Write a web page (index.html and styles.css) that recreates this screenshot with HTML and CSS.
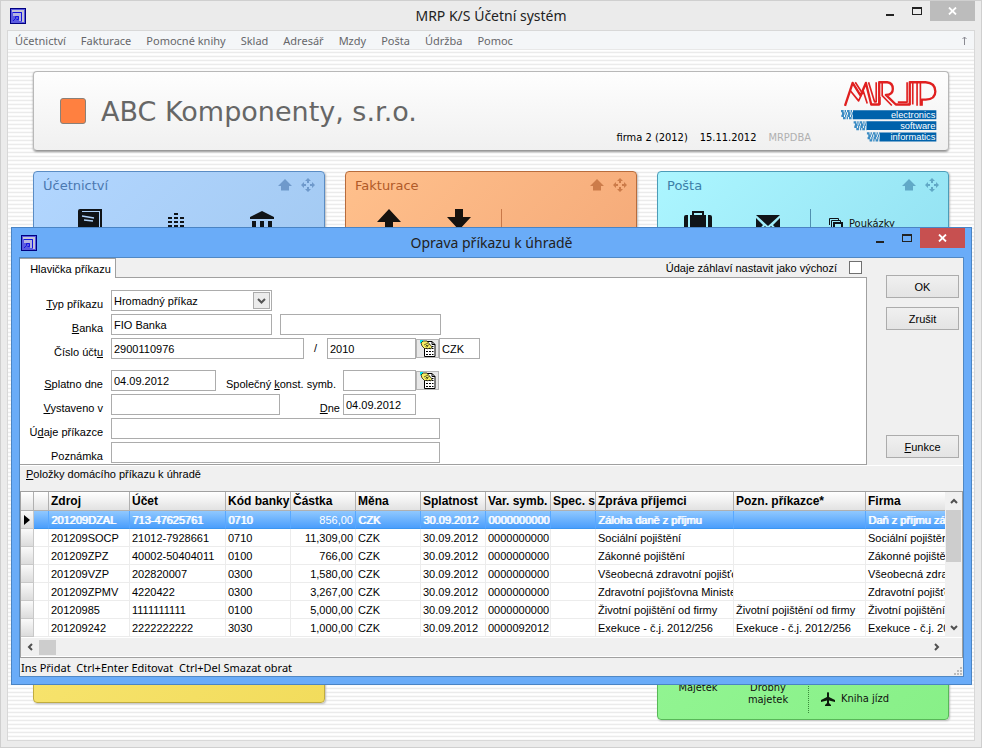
FILE: index.html
```html
<!DOCTYPE html>
<html lang="cs">
<head>
<meta charset="utf-8">
<title>MRP K/S Účetní systém</title>
<link rel="stylesheet" href="styles.css">
</head>
<body>
<svg class="defs" aria-hidden="true">
  <symbol id="app" viewBox="0 0 16 16">
    <rect x=".5" y=".5" width="15" height="15" fill="#5a5ae0" stroke="#000080"/>
    <path d="M2 2h12v12h-2V4H2z" fill="#c4c4d4"/>
    <path d="M3 4.500h8.500V13" fill="none" stroke="#1414e0"/>
    <path d="M3 5h8v8H9V8H3z" fill="#b4b4e0"/>
    <path d="M5.500 10.500v-2h3v3h-2M5.500 10.500L3 13" fill="none" stroke="#1414e0"/>
  </symbol>
  <symbol id="raise" viewBox="0 0 14 12"><path d="M7 0l7 7h-3v4.500H3V7H0z" fill="currentColor"/></symbol>
  <symbol id="move" viewBox="0 0 14 14"><path d="M7 0l3 3H8v2H6V3H4zM7 14l-3-3h2V9h2v2h2zM0 7l3-3v2h2v2H3v2zM14 7l-3 3V8H9V6h2V4z" fill="currentColor"/></symbol>
  <symbol id="min" viewBox="0 0 12 10"><path d="M2 8h8v2H2z" fill="currentColor"/></symbol>
  <symbol id="max" viewBox="0 0 12 10"><path d="M1 1h10v8H1zM2 3v5h8V3z" fill="currentColor" fill-rule="evenodd"/></symbol>
  <symbol id="close" viewBox="0 0 9 8"><path d="M1 .5l7 7M8 .5l-7 7" stroke="currentColor" stroke-width="1.800"/></symbol>
  <symbol id="list" viewBox="0 0 17 17">
    <path d="M5.500 1.500H13l3 3v12H5.500z" fill="#fff" stroke="#000"/>
    <path d="M13 1.500v3h3M13 6.500h1.500M7 8.500h2M10 8.500h2M13 8.500h1.500M7 11.500h2M10 11.500h2M13 11.500h1.500M7 14.500h2M10 14.500h2M13 14.500h1.500" fill="none" stroke="#000"/>
    <path d="M1 0h3v3H1z" fill="#00e5f0"/>
    <path d="M2 3l2-2h4l5 6-1 2-2-1-1 1-2-1-1 1-3-3z" fill="#f6ef62" stroke="#000" stroke-width=".7"/>
    <path d="M5 5l4-2M6.500 6.500l4-2M9 7l-2-2" stroke="#000" stroke-width=".6"/>
  </symbol>
</svg>

<div class="window">
  <header class="titlebar">
    <svg class="app-icon"><use href="#app"/></svg>
    <h1 class="caption">MRP K/S Účetní systém</h1>
    <div class="controls">
      <button class="control" aria-label="Minimalizovat"><svg class="glyph"><use href="#min"/></svg></button>
      <button class="control" aria-label="Maximalizovat"><svg class="glyph"><use href="#max"/></svg></button>
      <button class="control close" aria-label="Zavřít"><svg class="cross"><use href="#close"/></svg></button>
    </div>
  </header>

  <div class="client">
    <nav class="menu">
      <button>Účetnictví</button><button>Fakturace</button><button>Pomocné knihy</button><button>Sklad</button><button>Adresář</button><button>Mzdy</button><button>Pošta</button><button>Údržba</button><button>Pomoc</button>
      <button class="menu-up" aria-label="Nahoru"><svg width="5" height="9" viewBox="0 0 5 9"><path d="M2.500 9V1M.5 3l2-2 2 2" fill="none" stroke="#8a8a92"/></svg></button>
    </nav>

    <main class="desktop">
      <section class="company">
        <span class="swatch"></span>
        <h2 class="company-name">ABC Komponenty, s.r.o.</h2>
        <p class="meta"><span>firma 2 (2012)</span><span>15.11.2012</span><span class="user">MRPDBA</span></p>
        <svg class="logo" viewBox="30 30 295 185" role="img" aria-label="MRP">
          <g fill="none" stroke-linejoin="round">
            <path class="logo-thin" d="M45 107L68 38L92 76L108 38L124 103H148V36H172Q189 38 189 56Q189 74 168 74L198 103H240V36H288Q317 38 317 64Q317 88 288 88H276V107"/>
            <path class="logo-line" d="M76 36L94 64M60 60L86 92L100 62L112 100M116 36L134 95H139V36M157 36V76L186 106M249 36V103M262 36V107M272 36V107M150 80V104M232 36V96H204"/>
          </g>
          <path fill="#0062ab" d="M69 120h251v27H69zM110 153h210v27H110zM150 187h170v27H150z"/>
          <path fill="none" stroke="#3b8cc4" stroke-width="7" stroke-dasharray="8 3 4 3" d="M33 123h36M36 130h33M34 137h35M39 144h30M71 157h39M75 164h35M73 170h37M79 177h31M111 190h39M115 197h35M113 204h37M119 211h31"/>
          <g class="logo-text" text-anchor="end"><text x="317" y="143">electronics</text><text x="317" y="176">software</text><text x="317" y="210">informatics</text></g>
        </svg>
      </section>

      <div class="columns">
        <div class="column">
          <section class="panel blue">
            <header class="panel-head"><h3>Účetnictví</h3><svg class="raise"><use href="#raise"/></svg><svg class="move"><use href="#move"/></svg></header>
            <div class="tiles thirds">
              <div class="tile"><svg width="24" height="24" viewBox="0 0 24 24"><path d="M2 0h22v23h-2V2H4v1h17v21H2q-2 0-2-2V2q0-2 2-2z" fill="#101418"/><path d="M4 7l12 2M6 11l9 1" stroke="#b0d2f8" stroke-width="1.500"/></svg></div>
              <div class="tile"><svg width="16" height="22" viewBox="0 0 16 22"><path d="M2 22V8M8 22V2M14 22V6" fill="none" stroke="#101418" stroke-width="4" stroke-dasharray="2 2"/></svg></div>
              <div class="tile"><svg width="24" height="24" viewBox="0 0 24 24"><path d="M12 2l12 6v2H0V8zM2 12h4v8H2zM10 12h4v8h-4zM18 12h4v8h-4zM0 22h24v2H0z" fill="#101418"/></svg></div>
            </div>
          </section>
          <section class="panel yellow"></section>
        </div>
        <div class="column">
          <section class="panel orange">
            <header class="panel-head"><h3>Fakturace</h3><svg class="raise"><use href="#raise"/></svg><svg class="move"><use href="#move"/></svg></header>
            <div class="tiles">
              <div class="tile"><svg width="24" height="24" viewBox="0 0 24 24"><path d="M12 0l12 13h-8v11H8V13H0z" fill="#16120e"/></svg></div>
              <div class="tile"><svg width="24" height="24" viewBox="0 0 24 24"><path d="M8 0h8v8h8L12 21 0 8h8z" fill="#16120e"/></svg></div>
              <div class="side"></div>
            </div>
          </section>
        </div>
        <div class="column">
          <section class="panel cyan">
            <header class="panel-head"><h3>Pošta</h3><svg class="raise"><use href="#raise"/></svg><svg class="move"><use href="#move"/></svg></header>
            <div class="tiles">
              <div class="tile"><svg width="28" height="28" viewBox="0 0 28 28"><path d="M0 24V8q0-2 2-2h2v20H2q-2 0-2-2zM6 6h2V2h12v4h2v20H6zM10 4v2h8V4zM24 6h2q2 0 2 2v16q0 2-2 2h-2z" fill="#101418" fill-rule="evenodd"/></svg></div>
              <div class="tile"><svg width="24" height="28" viewBox="0 0 24 28"><path d="M0 6h24L12 17zM0 9l7 7-7 8zM24 9l-7 7 7 8zM9 17l3 3 3-3 8 7H1z" fill="#101418"/></svg></div>
              <div class="side"><a href="#poukazky" class="link"><svg width="14" height="12" viewBox="0 0 14 12"><path d="M.5 7V.5h9V3M2.500 9V2.500h9V4" fill="none" stroke="#101418"/><path d="M4 4h10v8H4zM6 6v4h6V6z" fill="#101418" fill-rule="evenodd"/></svg>Poukázky</a></div>
            </div>
          </section>
          <section class="panel green">
            <div class="tiles">
              <div class="tile">Majetek</div>
              <div class="tile">Drobný majetek</div>
              <div class="side"><a href="#kniha" class="link"><svg width="14" height="14" viewBox="0 0 14 14"><path d="M6 1q1-2 2 0v4l6 3v2L8 8.500V11l2 2v1H4v-1l2-2V8.500L0 10V8l6-3z" fill="#0c1a0c"/></svg>Kniha jízd</a></div>
            </div>
          </section>
        </div>
      </div>
    </main>
  </div>
</div>

<div class="dialog" role="dialog" aria-labelledby="dialog-title">
  <header class="titlebar">
    <svg class="app-icon"><use href="#app"/></svg>
    <h2 class="caption" id="dialog-title">Oprava příkazu k úhradě</h2>
    <div class="controls">
      <button class="control" aria-label="Minimalizovat"><svg class="glyph"><use href="#min"/></svg></button>
      <button class="control" aria-label="Maximalizovat"><svg class="glyph"><use href="#max"/></svg></button>
      <button class="control close" aria-label="Zavřít"><svg class="cross"><use href="#close"/></svg></button>
    </div>
  </header>

  <div class="dialog-client">
    <div class="top">
      <div class="sheet">
        <div class="tabs">
          <button class="tab">Hlavička příkazu</button>
          <div class="tab-rest"><label for="default">Údaje záhlaví nastavit jako výchozí</label><input type="checkbox" id="default"></div>
        </div>
        <form class="form">
          <div class="row"><label class="name" for="typ"><u>T</u>yp příkazu</label>
            <span class="select w-bank"><select id="typ"><option>Hromadný příkaz</option></select><svg class="drop" viewBox="0 0 17 17"><rect x=".5" y=".5" width="16" height="16" fill="#ececec" stroke="#acacac"/><path d="M5 7l3.500 3.500L12 7" fill="none" stroke="#555" stroke-width="2"/></svg></span></div>
          <div class="row"><label class="name" for="banka"><u>B</u>anka</label><input class="w-bank" id="banka" value="FIO Banka"><input class="w-bank" aria-label="Název banky"></div>
          <div class="row"><label class="name" for="ucet">Číslo účt<u>u</u></label><input class="w-account" id="ucet" value="2900110976"><span class="slash">/</span>
            <span class="group"><input class="w-code" aria-label="Kód banky" value="2010"><button type="button" class="pick" aria-label="Vybrat banku"><svg width="17" height="17"><use href="#list"/></svg></button><input class="w-currency" aria-label="Měna" value="CZK"></span></div>
          <div class="row spaced"><label class="name" for="splatno"><u>S</u>platno dne</label><input class="w-date" id="splatno" value="04.09.2012">
            <span class="group second"><label class="inner" for="symbol">Společný <u>k</u>onst. symb.</label><input class="w-short" id="symbol"><button type="button" class="pick" aria-label="Vybrat symbol"><svg width="17" height="17"><use href="#list"/></svg></button></span></div>
          <div class="row"><label class="name" for="misto"><u>V</u>ystaveno v</label><input class="w-place" id="misto">
            <span class="group no-pick"><label class="inner" for="dne"><u>D</u>ne</label><input class="w-short" id="dne" value="04.09.2012"></span></div>
          <div class="row"><label class="name" for="udaje">Ú<u>d</u>aje příkazce</label><input class="w-full" id="udaje"></div>
          <div class="row"><label class="name" for="poznamka">Poznámka</label><input class="w-full" id="poznamka"></div>
        </form>
      </div>
      <div class="actions">
        <button class="push">OK</button>
        <button class="push">Zrušit</button>
        <button class="push last"><u>F</u>unkce</button>
      </div>
    </div>

    <div class="items-label"><u>P</u>oložky domácího příkazu k úhradě</div>
    <div class="grid">
      <div class="grid-view">
        <table>
          <colgroup><col class="c-mark"><col class="c-gap"><col class="c-source"><col class="c-account"><col class="c-std"><col class="c-std"><col class="c-std"><col class="c-std"><col class="c-std"><col class="c-spec"><col class="c-message"><col class="c-note"><col></colgroup>
          <thead><tr><th></th><th></th><th>Zdroj</th><th>Účet</th><th>Kód banky</th><th>Částka</th><th>Měna</th><th>Splatnost</th><th>Var. symb.</th><th>Spec. s</th><th>Zpráva příjemci</th><th>Pozn. příkazce*</th><th>Firma</th></tr></thead>
          <tbody>
            <tr class="selected"><td><svg class="pointer" width="6" height="10" viewBox="0 0 6 10"><path d="M0 0l6 5-6 5z"/></svg></td><td></td><td>201209DZAL</td><td>713-47625761</td><td>0710</td><td class="num">856,00</td><td>CZK</td><td>30.09.2012</td><td>0000000000</td><td></td><td>Záloha daně z příjmu</td><td></td><td>Daň z příjmu zálohy</td></tr>
            <tr><td></td><td></td><td>201209SOCP</td><td>21012-7928661</td><td>0710</td><td class="num">11,309,00</td><td>CZK</td><td>30.09.2012</td><td>0000000000</td><td></td><td>Sociální pojištění</td><td></td><td>Sociální pojištění</td></tr>
            <tr><td></td><td></td><td>201209ZPZ</td><td>40002-50404011</td><td>0100</td><td class="num">766,00</td><td>CZK</td><td>30.09.2012</td><td>0000000000</td><td></td><td>Zákonné pojištění</td><td></td><td>Zákonné pojištění</td></tr>
            <tr><td></td><td></td><td>201209VZP</td><td>202820007</td><td>0300</td><td class="num">1,580,00</td><td>CZK</td><td>30.09.2012</td><td>0000000000</td><td></td><td>Všeobecná zdravotní pojišťovna</td><td></td><td>Všeobecná zdravotní</td></tr>
            <tr><td></td><td></td><td>201209ZPMV</td><td>4220422</td><td>0300</td><td class="num">3,267,00</td><td>CZK</td><td>30.09.2012</td><td>0000000000</td><td></td><td>Zdravotní pojišťovna Ministerstva</td><td></td><td>Zdravotní pojišťovna</td></tr>
            <tr><td></td><td></td><td>20120985</td><td>1111111111</td><td>0100</td><td class="num">5,000,00</td><td>CZK</td><td>30.09.2012</td><td>0000000000</td><td></td><td>Životní pojištění od firmy</td><td>Životní pojištění od firmy</td><td>Životní pojištění</td></tr>
            <tr><td></td><td></td><td>201209242</td><td>2222222222</td><td>3030</td><td class="num">1,000,00</td><td>CZK</td><td>30.09.2012</td><td>0000092012</td><td></td><td>Exekuce - č.j. 2012/256</td><td>Exekuce - č.j. 2012/256</td><td>Exekuce - č.j. 2012/256</td></tr>
          </tbody>
        </table>
        <div class="vbar">
          <svg width="8" height="6" viewBox="0 0 8 6"><path d="M1 5l3-3 3 3" fill="none" stroke="#505050" stroke-width="2"/></svg>
          <span class="vthumb"></span>
          <svg width="8" height="6" viewBox="0 0 8 6"><path d="M1 1l3 3 3-3" fill="none" stroke="#505050" stroke-width="2"/></svg>
        </div>
      </div>
      <div class="hbar">
        <svg width="6" height="8" viewBox="0 0 6 8"><path d="M5 1L2 4l3 3" fill="none" stroke="#505050" stroke-width="2"/></svg>
        <span class="hthumb"></span>
        <svg width="6" height="8" viewBox="0 0 6 8"><path d="M1 1l3 3-3 3" fill="none" stroke="#505050" stroke-width="2"/></svg>
      </div>
    </div>
    <footer class="status"><span>Ins Přidat&nbsp; Ctrl+Enter Editovat&nbsp; Ctrl+Del Smazat obrat</span>
      <svg width="8" height="8" viewBox="0 0 8 8"><path d="M6 0h2v2H6zM3 3h2v2H3zM6 3h2v2H6zM0 6h2v2H0zM3 6h2v2H3zM6 6h2v2H6z" fill="#bcbcbc"/></svg></footer>
  </div>
</div>
</body>
</html>
```
FILE: styles.css
```css
* { box-sizing: border-box; }
body { margin: 0; height: 100vh; overflow: hidden; position: relative; background: #ebebeb; color: #000; font: 11px "Liberation Sans", Arial, sans-serif; }
h1, h2, h3, p { margin: 0; font-weight: normal; }
button, input, select { font: inherit; color: inherit; margin: 0; border-radius: 0; }
button { padding: 0; border: 0; background: none; }
svg { display: block; flex: none; }
.defs { position: absolute; width: 0; height: 0; }

/* Window frames */
.window { height: 100%; display: flex; flex-direction: column; padding: 0 6px 6px; border: 1px solid #cfcfcf; }
.titlebar { display: grid; grid-template-columns: 1fr auto 1fr; align-items: center; height: 29px; color: #222; }
.app-icon { width: 16px; height: 16px; margin-left: 3px; }
.caption { font: 14px "Noto Sans", sans-serif; }
.controls { display: flex; justify-content: flex-end; align-self: start; }
.control { display: grid; place-items: center; width: 27px; height: 20px; }
.glyph { width: 12px; height: 10px; }
.close { width: 45px; color: #fff; background: #bcbcbc; }
.cross { width: 9px; height: 8px; }
.client { flex: 1; display: flex; flex-direction: column; min-height: 0; border: 1px solid #d8d8d8; }

.menu { display: flex; gap: 15px; height: 19px; padding: 0 7px; background: #f4f6f8; border-bottom: 1px solid #e8e8e8; color: #66666a; font: 11px "Noto Sans", sans-serif; }
.menu-up { margin-left: auto; }

.desktop { flex: 1; min-height: 0; overflow: hidden; padding: 21px 25px 0; background: repeating-linear-gradient(#fff 0 1px, #f9f9f9 1px 2px, #ebebeb 2px 3px, #fbfbfb 3px 4px); }
.company { display: flex; align-items: center; height: 80px; padding: 0 10px 0 26px; border: 1px solid #b8b8b8; border-bottom-color: #999; border-radius: 4px; background: linear-gradient(#fefefe, #f0f0f0); box-shadow: 0 1px 2px #999; }
.swatch { width: 26px; height: 26px; border: 1px solid #8a8078; border-radius: 3px; background: #ff8040; }
.company-name { margin-left: 15px; color: #666; font: 27px "DejaVu Sans", sans-serif; }
.meta { display: flex; gap: 12px; margin-left: auto; align-self: flex-end; padding-bottom: 6px; font: 11px "DejaVu Sans Condensed", "Noto Sans", sans-serif; }
.user { color: #b0b0b0; }
.logo { width: 98px; height: 62px; margin-left: 29px; }
.logo-thin { stroke: #e02020; stroke-width: 7; }
.logo-line { stroke: #e02020; stroke-width: 5; }
.logo-text { fill: #fff; font: 28px "Liberation Sans", sans-serif; }

.columns { display: grid; grid-template-columns: repeat(3, 1fr); gap: 20px; margin-top: 20px; }
.column { display: flex; flex-direction: column; gap: 20px; }
.panel { display: flex; flex-direction: column; min-height: 256px; border: 1px solid; border-radius: 4px; box-shadow: 1px 1px 2px #bbb; }
.panel-head { display: flex; align-items: center; height: 26px; padding: 0 9px; }
.panel-head h3 { margin-right: auto; font: 13px "DejaVu Sans", sans-serif; }
.raise { width: 14px; height: 12px; margin-right: 9px; opacity: .6; }
.move { width: 14px; height: 14px; opacity: .6; }
.blue { color: #4a78b0; border-color: #5a8cc4; background: linear-gradient(135deg, #b2d6ff, #9cc4ec); }
.orange { color: #b05a28; border-color: #b86c3c; background: linear-gradient(135deg, #ffc08c, #f0a070); }
.cyan { color: #3c80a8; border-color: #4c9cb8; background: linear-gradient(135deg, #acf6ff, #88d8ec); }
.yellow { border-color: #c0ac40; background: linear-gradient(135deg, #fae878, #f2dc5c); }
.green { min-height: 273px; justify-content: flex-end; border-color: #58b858; background: linear-gradient(135deg, #98f898, #88f088); }
.tiles { display: flex; padding: 11px 0 0 8px; font: 11px/12px "DejaVu Sans Condensed", "Noto Sans", sans-serif; color: #101010; }
.thirds { padding-left: 13px; }
.tile { display: flex; justify-content: center; width: 70px; text-align: center; }
.thirds .tile { width: 86px; }
.side { margin-left: 7px; padding-left: 18px; border-left: 1px solid #5090b0; height: 60px; }
.orange .side { border-color: #c87848; }
.link { display: flex; align-items: center; gap: 6px; padding-top: 9px; color: inherit; text-decoration: none; }
.cyan .tiles { padding-left: 5px; }
.green .tiles { align-items: flex-end; padding: 0 0 6px 5px; }
.green .tile { height: 31px; padding: 0 10px; }
.green .side { display: flex; align-items: flex-end; margin-left: 5px; padding: 0 0 7px 12px; border-left: 1px dotted #3a8a3a; }
.green .link { padding: 0; }

/* Dialog */
.dialog { position: absolute; top: 227px; left: 11px; right: 10px; padding: 0 7px 7px; border: 1px solid #4a84c4; background: #6aacf8; }
.dialog .titlebar { margin: 0 -1px; }
.dialog .close { background: #c75050; }
.dialog-client { border: 1px solid #5088c4; background: #f0f0f0; }
.top { display: flex; height: 208px; border-bottom: 1px solid #fff; }
.sheet { flex: 1; display: flex; flex-direction: column; }
.tabs { display: flex; flex: none; height: 20px; }
.tab { width: 96px; padding-left: 6px; background: #fff; border: solid #a0a0a0; border-width: 1px 1px 0 0; }
.tab-rest { flex: 1; display: flex; align-items: center; justify-content: flex-end; gap: 12px; padding-right: 5px; border-bottom: 1px solid #a0a0a0; }
.tab-rest input { appearance: none; width: 13px; height: 13px; border: 1px solid #707070; background: #fff; }
.form { flex: 1; padding-top: 12px; background: #fff; border: solid #a0a0a0; border-width: 0 1px 1px 0; }
.row { display: flex; gap: 8px; height: 21px; margin-bottom: 3px; }
.row:last-child { margin-bottom: 0; }
.spaced { margin-top: 11px; }
.row label { padding-top: 8px; line-height: 13px; text-align: right; white-space: nowrap; }
.row .name { width: 83px; }
.row input, .select { height: 21px; padding: 0 2px; border: 1px solid #acacac; background: #fff; }
.select { position: relative; }
.select select { appearance: none; width: 100%; height: 19px; padding: 0; border: 0; background: #fff; }
.drop { position: absolute; top: 1px; right: 1px; width: 17px; height: 17px; pointer-events: none; }
.group { display: flex; justify-content: flex-end; }
.slash { width: 7px; padding-top: 4px; line-height: 13px; text-align: center; }
.w-bank { width: 161px; }
.w-account { width: 193px; }
.w-code { width: 89px; }
.w-currency { width: 41px; }
.w-date { width: 105px; }
.w-short { width: 73px; }
.w-place { width: 169px; }
.w-full { width: 329px; }
.inner { margin-right: 7px; }
.second { width: 215px; }
.no-pick { width: 128px; }
.no-pick .inner { margin-right: 3px; }
.pick { display: grid; place-items: center; width: 23px; height: 19px; margin-top: 1px; border: 1px solid #b4b4b4; background: #e8e8e8; }
.actions { display: flex; flex-direction: column; gap: 9px; width: 96px; padding: 17px 4px 7px 19px; }
.push { height: 23px; border: 1px solid #acacac; background: linear-gradient(#f0f0f0, #e4e4e4); }
.last { margin-top: auto; }

.items-label { height: 25px; padding-left: 6px; line-height: 16px; }
.grid { border: 1px solid #a0a0a0; background: #fff; }
.grid-view { display: flex; }
table { flex: 1; width: 0; table-layout: fixed; border-collapse: separate; border-spacing: 0; }
.c-mark { width: 13px; }
.c-gap { width: 15px; }
.c-source { width: 81px; }
.c-account { width: 96px; }
.c-std { width: 65px; }
.c-spec { width: 45px; }
.c-message { width: 138px; }
.c-note { width: 132px; }
th, td { height: 18px; padding: 0 2px; line-height: 16px; overflow: hidden; white-space: nowrap; text-align: left; border: solid #ececec; border-width: 0 1px 1px 0; }
th { height: 19px; font-size: 12px; border-color: #b0b0b0; background: linear-gradient(#fff, #e2e2e2); }
th:last-child, td:last-child { border-right: 0; }
td:first-child { padding: 0 3px; border-color: #c8c8c8; background: linear-gradient(#fafafa, #dcdcdc); }
.num { text-align: right; }
.selected td:not(:first-child) { color: #fff; text-shadow: 1px 0 #fff; border-color: #3c96f0; border-right-color: #58a8ff; background: linear-gradient(#90c8ff, #4a9efc); }
.selected td.num:not(:first-child) { text-shadow: none; }
.vbar { display: flex; flex-direction: column; align-items: center; width: 17px; padding: 6px 0; background: #f0f0f0; }
.vthumb { width: 15px; height: 52px; margin: 6px 0 auto; background: #cdcdcd; }
.hbar { display: flex; align-items: center; height: 20px; padding: 0 22px 0 6px; background: #f0f0f0; border-top: 1px solid #fff; border-bottom: 1px solid #fff; }
.hthumb { width: 17px; height: 15px; margin: 0 auto 0 6px; background: #cdcdcd; }
.status { display: flex; justify-content: space-between; align-items: flex-end; height: 18px; padding: 0 1px 1px; font: 11px/15px "Noto Sans", sans-serif; }
```
